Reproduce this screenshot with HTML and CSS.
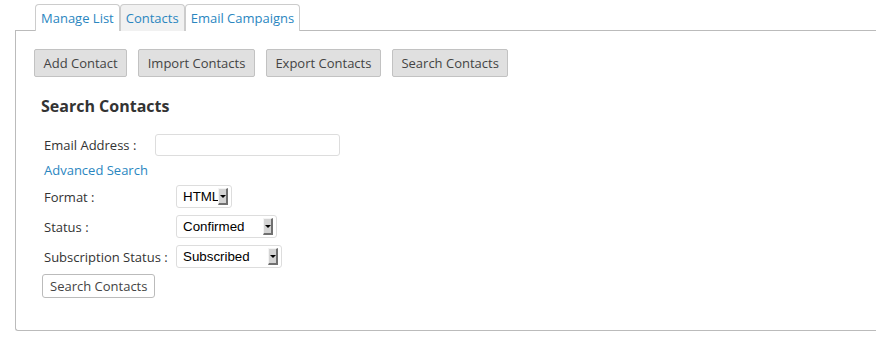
FILE: index.html
```html
<!DOCTYPE html>
<html lang="en">
<head>
    <meta charset="UTF-8">
    <title>Contacts - Search</title>
    <link rel="stylesheet" href="styles.css">
</head>
<body>
    <div class="wrap">
        <ul class="tabs">
            <li class="tab"><a href="#">Manage List</a></li>
            <li class="tab active"><a href="#">Contacts</a></li>
            <li class="tab"><a href="#">Email Campaigns</a></li>
        </ul>

        <div class="panel">
            <div class="actions">
                <button class="action">Add Contact</button>
                <button class="action">Import Contacts</button>
                <button class="action">Export Contacts</button>
                <button class="action">Search Contacts</button>
            </div>

            <h3>Search Contacts</h3>

            <form class="search-form">
                <div class="email-row">
                    <label for="email">Email Address :</label>
                    <input type="text" id="email" class="text-input">
                </div>

                <a href="#" class="advanced">Advanced Search</a>

                <div class="fields">
                    <label>Format :</label>
                    <div class="select select-format">
                        <select>
                            <option>HTML</option>
                            <option>Text</option>
                        </select>
                        <span class="arrow"></span>
                    </div>

                    <label>Status :</label>
                    <div class="select select-status">
                        <select>
                            <option>Confirmed</option>
                            <option>Unconfirmed</option>
                        </select>
                        <span class="arrow"></span>
                    </div>

                    <label>Subscription Status :</label>
                    <div class="select select-sub">
                        <select>
                            <option>Subscribed</option>
                            <option>Unsubscribed</option>
                        </select>
                        <span class="arrow"></span>
                    </div>
                </div>

                <button type="submit" class="submit">Search Contacts</button>
            </form>
        </div>
    </div>
</body>
</html>
```

FILE: styles.css
```css
body {
    margin: 0;
    background: #fff;
    font-family: 'Open Sans', sans-serif;
    font-size: 13px;
    color: #333;
}
.wrap {
    padding: 4px 0 0 15px;
}
.tabs {
    list-style: none;
    margin: 0 0 0 20px;
    padding: 0;
    display: flex;
}
.tab {
    height: 26px;
    border: 1px solid #ccc;
    border-bottom: none;
    border-radius: 4px 4px 0 0;
    background: #fff;
    display: flex;
    align-items: center;
}
.tab.active {
    background: #f1f1f1;
}
.tab a {
    display: block;
    padding: 0 5px;
    color: #2a86bf;
    text-decoration: none;
    line-height: 18px;
}
.panel {
    border: 1px solid #bbb;
    border-right: none;
    border-radius: 0 0 0 3px;
    margin-top: -1px;
    padding: 18px 0 32px 18px;
}
.actions {
    display: flex;
    gap: 11px;
}
.action {
    height: 28px;
    padding: 0 8.5px;
    font-family: 'Open Sans', sans-serif;
    font-size: 13px;
    color: #444;
    background: #e0e0e0;
    border: 1px solid #c2c2c2;
    border-radius: 2px;
}
h3 {
    margin: 19px 0 0 7px;
    font-size: 16px;
    line-height: 20px;
    font-weight: bold;
    color: #333;
}
.search-form {
    margin-top: 18px;
}
.email-row {
    display: grid;
    grid-template-columns: 111px auto;
    align-items: center;
    margin-left: 10px;
}
.text-input {
    width: 185px;
    height: 22px;
    box-sizing: border-box;
    border: 1px solid #ddd;
    border-radius: 3px;
    padding: 2px 5px;
}
.advanced {
    display: block;
    margin: 4px 0 0 10px;
    line-height: 20px;
    color: #2a86bf;
    text-decoration: none;
}
.fields {
    display: grid;
    grid-template-columns: 132px auto;
    row-gap: 7px;
    align-items: center;
    justify-items: start;
    margin: 5px 0 0 10px;
}
.select {
    display: flex;
    align-items: center;
    height: 23px;
    box-sizing: border-box;
    border: 1px solid #ddd;
    border-radius: 3px;
    padding: 0 3px 0 6px;
    background: #fff;
}
.select select {
    appearance: none;
    -webkit-appearance: none;
    border: none;
    background: transparent;
    padding: 0;
    margin: 0;
    flex: 1;
    min-width: 0;
    font-family: 'Liberation Sans', Arial, sans-serif;
    font-size: 13.33px;
    color: #000;
    outline: none;
}
.select-format {
    width: 56px;
}
.select-status {
    width: 101px;
}
.select-sub {
    width: 106px;
}
.arrow {
    position: relative;
    flex: none;
    width: 10px;
    height: 17px;
    box-sizing: border-box;
    background: #d4d4d4;
    border-top: 1px solid #f4f4f4;
    border-left: 1px solid #f4f4f4;
    border-right: 2px solid #707070;
    border-bottom: 2px solid #707070;
}
.arrow::after {
    content: "";
    position: absolute;
    left: 1px;
    top: 6px;
    border-left: 3px solid transparent;
    border-right: 3px solid transparent;
    border-top: 3px solid #000;
}
.submit {
    margin: 6px 0 0 8px;
    height: 24px;
    padding: 0 7px;
    font-family: 'Open Sans', sans-serif;
    font-size: 13px;
    color: #444;
    background: #fff;
    border: 1px solid #bbb;
    border-radius: 3px;
}
```
